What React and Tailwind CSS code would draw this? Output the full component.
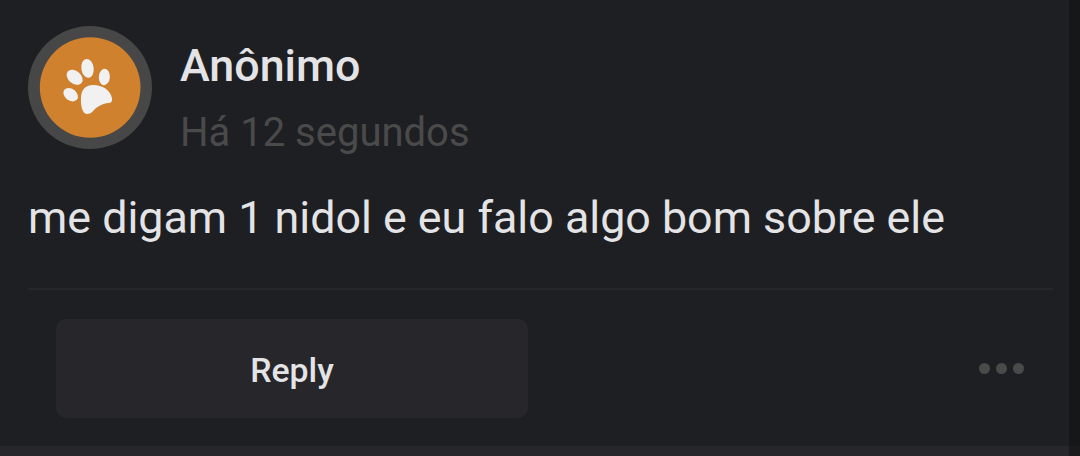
import React from 'react';

const post = {
  author: 'Anônimo',
  time: 'Há 12 segundos',
  text: 'me digam 1 nidol e eu falo algo bom sobre ele',
};

function PawAvatar() {
  return (
    <svg viewBox="0 0 372 372" className="h-[124px] w-[124px] shrink-0" role="img">
      <ellipse cx="186" cy="184.5" rx="186" ry="184.5" fill="#474747" />
      <circle cx="186.5" cy="184.5" r="151" fill="#d0812e" />
      <g transform="translate(66 72)" fill="#f1f1f1">
        <ellipse cx="62" cy="134" rx="24" ry="17.5" transform="rotate(38 62 134)" />
        <ellipse cx="74" cy="82" rx="27" ry="19" transform="rotate(40 74 82)" />
        <ellipse cx="112.5" cy="55" rx="18.5" ry="28.5" transform="rotate(-8 112.5 55)" />
        <ellipse cx="163" cy="81" rx="16.5" ry="24.5" transform="rotate(4 163 81)" />
        <path d="M93 142C94 120 106 105 129 105C158 105 181 120 186 145C187 155 184 159 176 159C157 161 145 168 132 180C124 189 118 192 110 192C98 191 91 168 93 142Z" />
      </g>
    </svg>
  );
}

export default function App() {
  return (
    <div className="flex h-[456px] w-[1080px] overflow-hidden bg-[#161719] font-[Roboto,sans-serif] text-[#e4e4e6]">
      <div className="flex w-[1069px] flex-col bg-[#1e1f23]">
        <div className="flex gap-7 pt-[26px] pl-7">
          <PawAvatar />
          <div className="pt-3.5">
            <div className="text-[44.8px] leading-[52px] font-medium whitespace-nowrap">{post.author}</div>
            <div className="mt-[17px] -mb-px text-[40px] leading-[48px] whitespace-nowrap text-[#4a4a4b]">{post.time}</div>
          </div>
        </div>

        <p className="mt-9 ml-7 text-[44.8px] leading-[52px] whitespace-nowrap">{post.text}</p>

        <div className="mt-11 mr-4 ml-7 h-0.5 bg-[#27272b]" />

        <div className="mt-[29px] flex items-center justify-between pr-[45px] pl-14">
          <button className="h-[99px] w-[472px] rounded-[10px] bg-[#27262b] pt-1.5 text-[33.8px] font-medium">
            Reply
          </button>
          <div className="flex gap-[6px]">
            <span className="h-[11px] w-[11px] rounded-full bg-[#4a4a4a]" />
            <span className="h-[11px] w-[11px] rounded-full bg-[#4a4a4a]" />
            <span className="h-[11px] w-[11px] rounded-full bg-[#4a4a4a]" />
          </div>
        </div>

        <div className="mt-auto h-2.5 bg-[#27262b]" />
      </div>
      <div className="mt-auto h-2.5 flex-1 bg-[#1a1a1d]" />
    </div>
  );
}
